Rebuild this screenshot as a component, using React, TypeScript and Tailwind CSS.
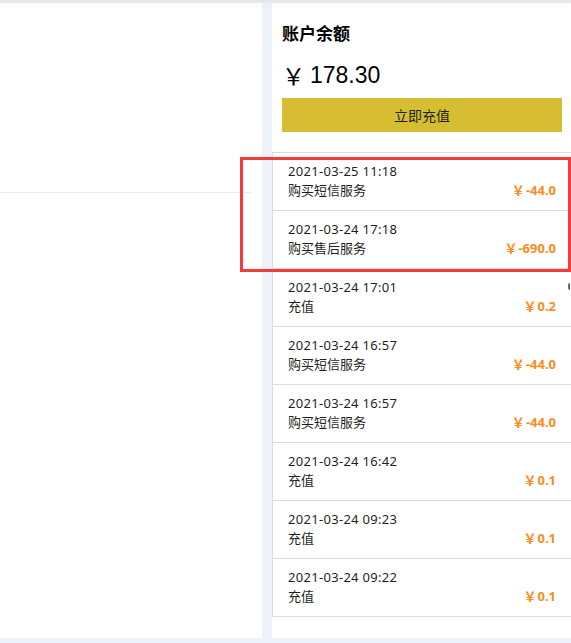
import React from "react";

const records = [
  { time: "2021-03-25 11:18", title: "购买短信服务", amount: "-44.0" },
  { time: "2021-03-24 17:18", title: "购买售后服务", amount: "-690.0" },
  { time: "2021-03-24 17:01", title: "充值", amount: "0.2" },
  { time: "2021-03-24 16:57", title: "购买短信服务", amount: "-44.0" },
  { time: "2021-03-24 16:57", title: "购买短信服务", amount: "-44.0" },
  { time: "2021-03-24 16:42", title: "充值", amount: "0.1" },
  { time: "2021-03-24 09:23", title: "充值", amount: "0.1" },
  { time: "2021-03-24 09:22", title: "充值", amount: "0.1" },
];

export default function App() {
  return (
    <div
      className="relative w-[571px] h-[643px] overflow-hidden bg-[#eef2fa] text-[#1f1f1f]"
      style={{ fontFamily: '"Noto Sans", "Noto Sans CJK SC", sans-serif' }}
    >
      <div className="relative z-10 h-[3px] bg-[#e7e8ee] shadow-[0_2px_8px_rgba(0,0,0,0.05)]" />

      <div className="flex gap-[10px] h-[635px]">
        {/* left panel */}
        <div className="w-[262px] shrink-0 bg-white pr-[10px]">
          <div className="h-[190px] border-b border-[#ebebeb]" />
        </div>

        {/* right panel: account balance */}
        <div className="w-[300px] shrink-0 bg-white flex flex-col">
          <div className="px-[10px] pt-[19px]">
            <h1 className="text-[17px] leading-[24px] font-bold text-black">账户余额</h1>
            <div className="mt-[14px] h-[30px] flex items-center text-black">
              <span className="text-[23px] leading-[30px]" style={{ fontFamily: '"Noto Sans CJK SC", sans-serif' }}>￥</span>
              <span className="ml-[5px] text-[23px] leading-[30px]" style={{ fontFamily: '"Liberation Sans", sans-serif' }}>178.30</span>
            </div>
            <button className="mt-[8px] w-[280px] h-[34px] bg-[#d6bd31] text-[14px] text-[#1f1f1f]">立即充值</button>
          </div>

          <div className="mt-[20px] border-l border-t border-[#dcdcdc]">
            {records.map((r, i) => (
              <div key={i} className="h-[58px] border-b border-[#dcdcdc] pl-[15px] pr-[16px] pt-[10px] flex items-end justify-between pb-[10px]">
                <div className="text-[13px] leading-[19px]">
                  <div className="tracking-[0.3px]">{r.time}</div>
                  <div>{r.title}</div>
                </div>
                <div className="text-[13px] leading-[19px] font-bold text-[#fb8c1c]">
                  <span className="mr-[1px]" style={{ fontFamily: '"Noto Sans CJK SC", sans-serif' }}>￥</span>
                  {r.amount}
                </div>
              </div>
            ))}
          </div>
        </div>
      </div>

      {/* annotation overlay */}
      <div className="absolute left-[240px] top-[157px] w-[331px] h-[115px] border-[3px] border-[#f23b3b] pointer-events-none" />
      <div className="absolute left-[568px] top-[283px] w-[2px] h-[7px] rounded-l-full bg-[#666]" />
    </div>
  );
}
